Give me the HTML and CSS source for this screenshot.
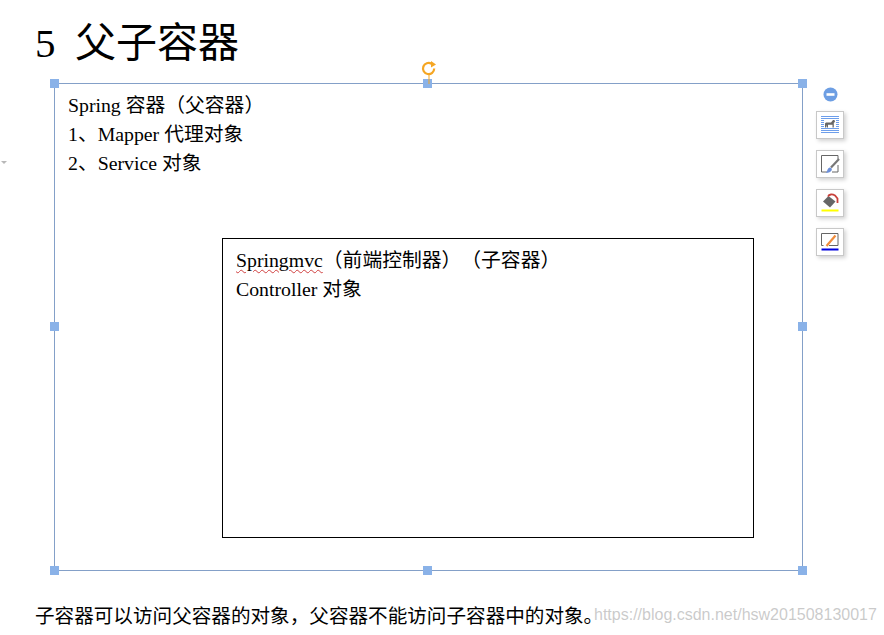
FILE: index.html
```html
<!DOCTYPE html>
<html lang="zh">
<head>
<meta charset="utf-8">
<title>父子容器</title>
<link rel="stylesheet" href="styles.css">
</head>
<body>
<div class="page">
  <span class="margin-mark"></span>
  <h1 class="title"><span class="num">5</span>父子容器</h1>
  <div class="stage">
    <div class="outer">
      <p class="line">Spring 容器（父容器）</p>
      <p class="line">1、Mapper 代理对象</p>
      <p class="line">2、Service 对象</p>
      <div class="inner">
        <p class="line"><span class="spell">Springmvc</span>（前端控制器）（子容器）</p>
        <p class="line">Controller 对象</p>
      </div>
      <span class="handle tl"></span><span class="handle tc"></span><span class="handle tr"></span>
      <span class="handle ml"></span><span class="handle mr"></span>
      <span class="handle bl"></span><span class="handle bc"></span><span class="handle br"></span>
      <svg class="rotate" width="20" height="24" viewBox="0 0 20 24" fill="none" stroke="#f5a623">
        <path d="M15.2 8.5A5.6 5.6 0 1 1 12.5 3.7" stroke-width="2.2"/>
        <path d="M12 1l5 3.400L12 7.400z" fill="#f5a623" stroke="none"/>
        <path d="M10 14V24" stroke-width="1"/>
      </svg>
    </div>
    <div class="tools">
      <svg class="collapse" width="15" height="15" viewBox="0 0 15 15">
        <circle cx="7.5" cy="7.5" r="7" fill="#6d9ee3"/>
        <rect x="3.5" y="6.2" width="8" height="2.6" fill="#fff"/>
      </svg>
      <button class="tool" type="button" aria-label="布局选项">
        <svg width="20" height="20" viewBox="0 0 20 20">
          <g fill="#6d9eeb">
            <rect x="1" y="1" width="18" height="1"/><rect x="1" y="3" width="18" height="1"/>
            <rect x="1" y="5" width="3" height="1"/><rect x="16" y="5" width="3" height="1"/>
            <rect x="1" y="7" width="3" height="1"/><rect x="16" y="7" width="3" height="1"/>
            <rect x="1" y="9" width="3" height="1"/><rect x="16" y="9" width="3" height="1"/>
            <rect x="1" y="11" width="3" height="1"/><rect x="16" y="11" width="3" height="1"/>
            <rect x="1" y="13" width="18" height="1"/><rect x="1" y="15" width="18" height="1"/>
            <rect x="1" y="17" width="18" height="1"/>
          </g>
          <path d="M5 12.500V8.500L6 7.500H11L13 5H14.500L15 7L13.800 7.800V12.500H12.500V9.800H8V12.500H6.800V9.800L6 12.500Z" fill="#666"/>
        </svg>
      </button>
      <button class="tool" type="button" aria-label="形状样式">
        <svg width="20" height="20" viewBox="0 0 20 20" fill="none">
          <path d="M7 18H1.500V1.500H18V5" stroke="#666" stroke-width="1"/>
          <path d="M18 11V18H12" stroke="#666" stroke-width="1"/>
          <path d="M19 5L11 13.500" stroke="#777" stroke-width="2.200"/>
          <path d="M9.500 13.500c1.700 0 2.800 1.200 2.200 2.800-.6 1.500-3.200 2.700-5.700 2.700 1.200-1.200 1.300-4.700 3.500-5.500z" fill="#6d8fd8"/>
        </svg>
      </button>
      <button class="tool" type="button" aria-label="形状填充">
        <svg width="20" height="20" viewBox="0 0 20 20">
          <path d="M8.500 3L15.500 8.500L10 14.500L3 8.500Z" fill="#666"/>
          <path d="M8 3.500C9 1 12.500 1 15 2.500L17.500 5.500V10" fill="none" stroke="#c8423c" stroke-width="1.800"/>
          <rect x="1.500" y="16.500" width="17" height="2" fill="#ffff00"/>
        </svg>
      </button>
      <button class="tool" type="button" aria-label="形状轮廓">
        <svg width="20" height="20" viewBox="0 0 20 20" fill="none">
          <path d="M3.500 13.500H1.500V1.500H18V13.500H9" stroke="#666" stroke-width="1"/>
          <path d="M15.500 3.500L6.500 14" stroke="#f08c3c" stroke-width="2.200"/>
          <rect x="1.500" y="16.500" width="17" height="2" fill="#0000e0"/>
        </svg>
      </button>
    </div>
  </div>
  <p class="line closing">子容器可以访问父容器的对象，父容器不能访问子容器中的对象。</p>
  <span class="watermark">https://blog.csdn.net/hsw201508130017</span>
</div>
</body>
</html>
```
FILE: styles.css
```css
* { box-sizing: border-box; }
html, body { margin: 0; padding: 0; background: #fff; }
.page {
  position: relative;
  width: 884px;
  height: 635px;
  overflow: hidden;
  color: #000;
  font-family: "Liberation Serif", "Noto Sans CJK SC", serif;
  text-spacing-trim: space-all;
  text-autospace: no-autospace;
}
.title {
  margin: 0;
  height: 83px;
  padding: 18px 0 0 35px;
  font-size: 41px;
  line-height: 50px;
  font-weight: 400;
}
.num { display: inline-block; width: 40px; }
.stage {
  display: flex;
  align-items: flex-start;
  margin-left: 54px;
  gap: 13px;
}
.outer {
  position: relative;
  width: 749px;
  height: 488px;
  border: 1px solid #84a0c8;
  padding: 7px 0 0 13px;
}
.line {
  margin: 0;
  font-size: 19.800px;
  line-height: 29px;
  white-space: nowrap;
}
.inner {
  width: 532px;
  height: 300px;
  margin: 60px 0 0 154px;
  padding: 7px 0 0 13px;
  border: 1px solid #000;
}
.spell { text-decoration: underline wavy #d04040 1px; text-underline-offset: 2px; }
.handle {
  position: absolute;
  width: 9px;
  height: 9px;
  background: #8ab2e8;
}
.tl { left: -5px; top: -5px; }
.tc { left: 368px; top: -5px; }
.tr { right: -5px; top: -5px; }
.ml { left: -5px; top: 238px; }
.mr { right: -5px; top: 238px; }
.bl { left: -5px; bottom: -5px; }
.bc { left: 368px; bottom: -5px; }
.br { right: -5px; bottom: -5px; }
.rotate { position: absolute; left: 364px; top: -24px; }
.tools {
  display: flex;
  flex-direction: column;
  align-items: center;
  width: 28px;
  gap: 11px;
  padding-top: 4px;
}
.collapse { display: block; margin-bottom: -2px; }
.tool {
  display: flex;
  align-items: center;
  justify-content: center;
  width: 28px;
  height: 28px;
  padding: 0;
  background: #fff;
  border: 1px solid #c8c8c8;
  box-shadow: 2px 2px 4px rgba(0, 0, 0, 0.18);
}
.closing { margin: 31px 0 0 35px; font-size: 19.600px; }
.margin-mark {
  position: absolute;
  left: 1px;
  top: 161px;
  border-style: solid;
  border-width: 3px 3px 0;
  border-color: #b8b8b8 transparent transparent;
}
.watermark {
  position: absolute;
  left: 594px;
  top: 605px;
  font-family: "Liberation Sans", sans-serif;
  font-size: 16px;
  line-height: 20px;
  color: rgba(150, 150, 150, 0.5);
  white-space: nowrap;
}
```
